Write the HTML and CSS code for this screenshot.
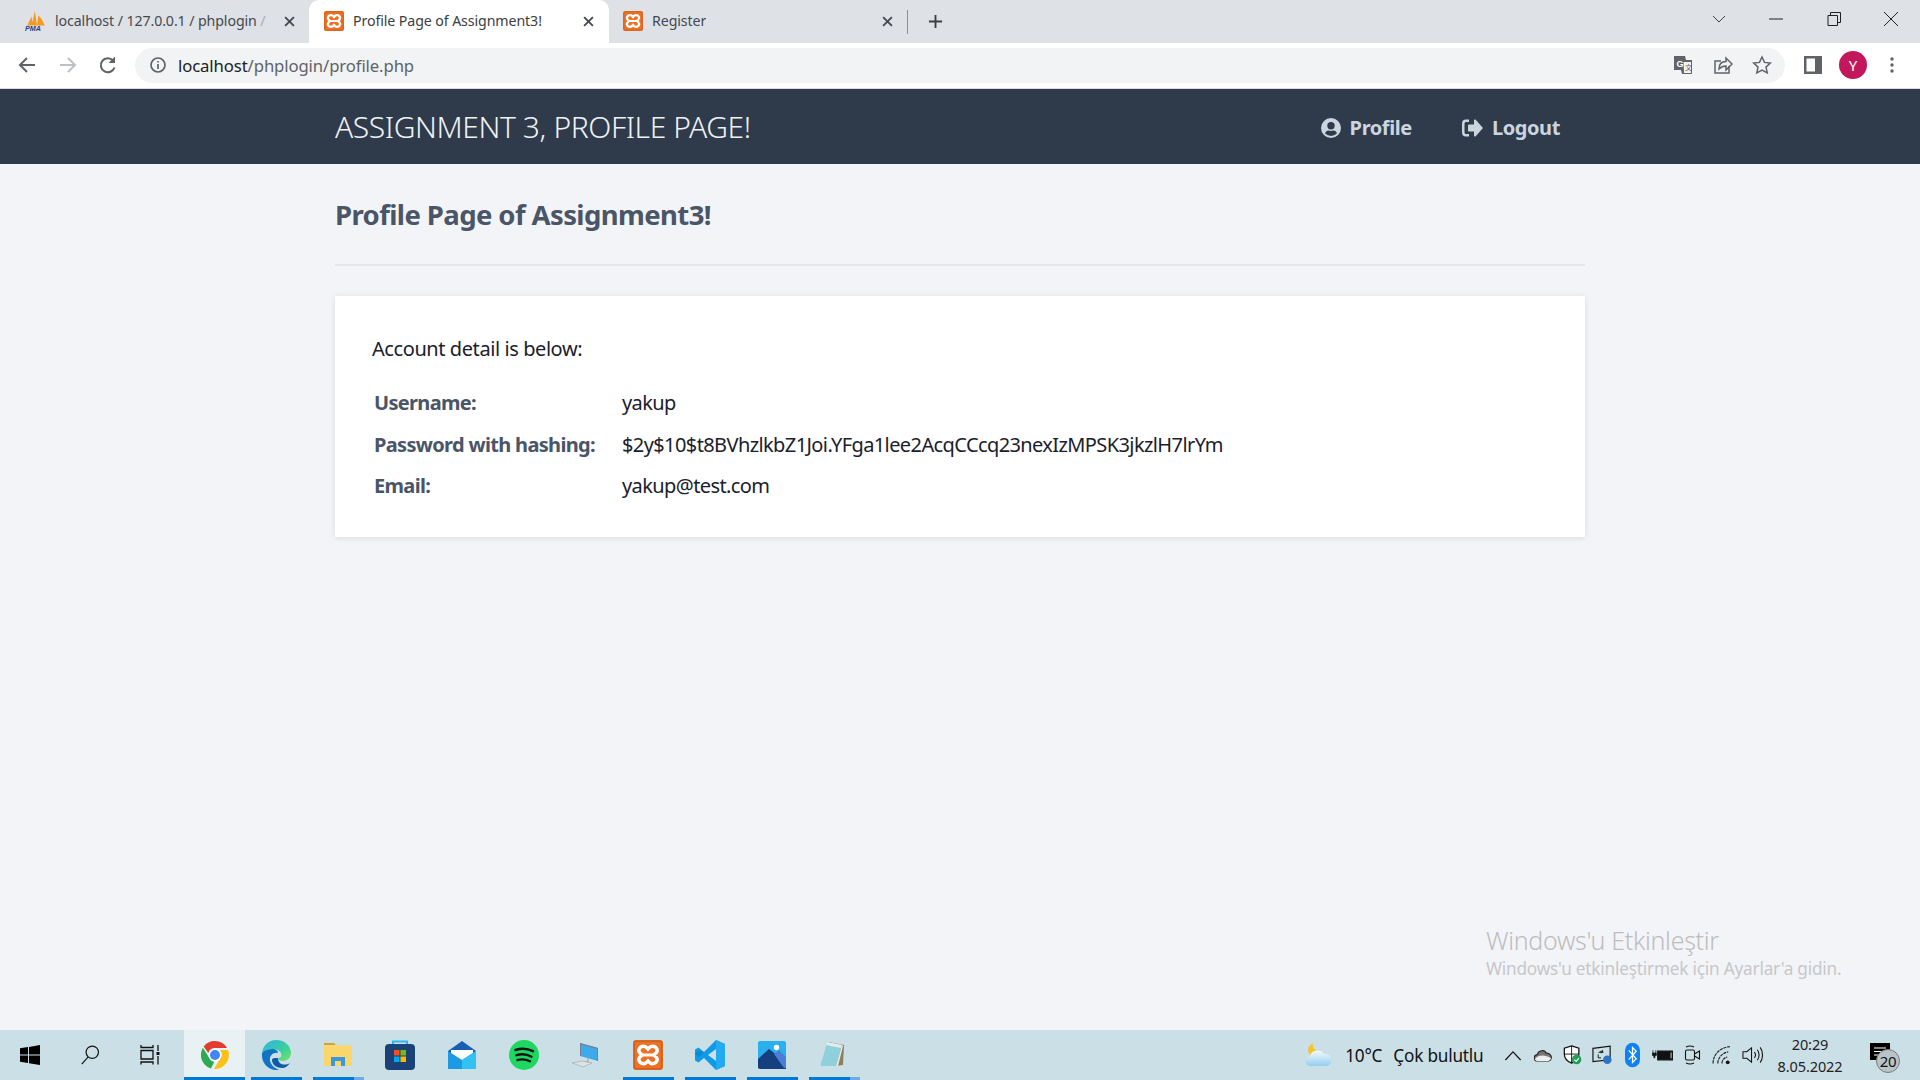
FILE: index.html
```html
<!DOCTYPE html>
<html lang="tr">
<head>
<meta charset="utf-8">
<title>Profile Page of Assignment3!</title>
<link rel="stylesheet" href="styles.css">
</head>
<body>
<div class="browser">
  <div class="tabstrip">
    <div class="tab tab-first">
      <svg class="fav fav-pma" viewBox="0 0 20 20"><path d="M2 14 6 6l1 8zM6 14 9 1l2 13zM11 14l1-9 3 3 3 6z" fill="#f39a22"/><text x="0" y="19.500" class="pma">PMA</text></svg>
      <span class="tab-title">localhost / 127.0.0.1 / phplogin<span class="fade"> /</span></span>
      <svg class="tab-x" viewBox="0 0 10 10"><path d="M1 1l8 8M9 1l-8 8"/></svg>
    </div>
    <div class="tab tab-active">
      <svg class="fav" viewBox="0 0 20 20"><use href="#xampp"/></svg>
      <span class="tab-title">Profile Page of Assignment3!</span>
      <svg class="tab-x" viewBox="0 0 10 10"><path d="M1 1l8 8M9 1l-8 8"/></svg>
    </div>
    <div class="tab tab-third">
      <svg class="fav" viewBox="0 0 20 20"><use href="#xampp"/></svg>
      <span class="tab-title">Register</span>
      <svg class="tab-x" viewBox="0 0 10 10"><path d="M1 1l8 8M9 1l-8 8"/></svg>
    </div>
    <div class="tab-sep"></div>
    <svg class="tab-new" viewBox="0 0 16 16"><path d="M8 1v14M1 8h14"/></svg>
    <div class="win-controls">
      <svg class="wc wc-chev" viewBox="0 0 14 14"><path d="M1 4l6 6 6-6"/></svg>
      <svg class="wc" viewBox="0 0 14 14"><path d="M0 7h14"/></svg>
      <svg class="wc" viewBox="0 0 14 14"><path d="M1 3.500h9.500v10H1zM3.500 3.500V.5h10v10h-3"/></svg>
      <svg class="wc" viewBox="0 0 14 14"><path d="M0 0l14 14M14 0L0 14"/></svg>
    </div>
  </div>

  <div class="toolbar">
    <svg class="tb-ic tb-back" viewBox="0 0 20 20"><path d="M18 10H3M10 3l-7 7 7 7"/></svg>
    <svg class="tb-ic tb-fwd" viewBox="0 0 20 20"><path d="M2 10h15M10 3l7 7-7 7"/></svg>
    <svg class="tb-ic tb-reload" viewBox="0 0 20 20"><path d="M16.500 12.500A7 7 0 1 1 15 5.500"/><path class="solid" d="M17 1.500V8h-6.500z"/></svg>
    <div class="omnibox">
      <svg class="omni-info" viewBox="0 0 18 18"><circle cx="9" cy="9" r="7"/><path d="M9 8v5M9 5v1.600"/></svg>
      <span class="url"><span class="url-host">localhost</span>/phplogin/profile.php</span>
      <svg class="omni-ic omni-translate" viewBox="0 0 20 20"><path class="solid" d="M1 1h11l1 4h6v14H9l-1-4H1z"/><path d="M10 6.500h8.500v12h-8z" class="tr-page"/><text x="3.500" y="12" class="tr-g">G</text><text x="12" y="15" class="tr-t">文</text></svg>
      <svg class="omni-ic omni-share" viewBox="0 0 20 20"><path d="M16 11v7H2V6h6"/><path d="M6 14c0-5 3-7.500 7-7.500V3l6 6-6 6v-4c-3 0-5 1-7 3z"/></svg>
      <svg class="omni-ic omni-star" viewBox="0 0 20 20"><path d="M10 2l2.500 5.400 5.800.7-4.300 4 1.200 5.800L10 15l-5.200 2.900L6 12.100l-4.300-4 5.800-.7z"/></svg>
    </div>
    <svg class="tb-panel" viewBox="0 0 18 18"><path d="M0 0h18v18H0z" fill="#5f6368"/><path d="M2.500 2.500h8.500v13H2.500z" fill="#fff"/></svg>
    <div class="avatar">Y</div>
    <svg class="tb-dots" viewBox="0 0 4 16"><circle cx="2" cy="2" r="1.700"/><circle cx="2" cy="8" r="1.700"/><circle cx="2" cy="14" r="1.700"/></svg>
  </div>

  <main class="page">
    <nav class="navbar">
      <div class="container nav-inner">
        <h1 class="brand">ASSIGNMENT 3, PROFILE PAGE!</h1>
        <div class="nav-links">
          <a class="nav-link nav-profile">
            <svg class="nav-ic" viewBox="0 0 20 20"><path fill-rule="evenodd" d="M10 0a10 10 0 1 0 0 20 10 10 0 0 0 0-20zm0 4a3.700 3.700 0 1 1 0 7.400A3.700 3.700 0 0 1 10 4zm0 14a8 8 0 0 1-6-2.700c.6-1.700 2-2.800 3.500-2.800.8 0 1.500.5 2.500.5s1.700-.5 2.500-.5c1.500 0 2.900 1.100 3.500 2.800A8 8 0 0 1 10 18z"/></svg>
            Profile
          </a>
          <a class="nav-link">
            <svg class="nav-ic nav-ic-out" viewBox="0 0 21 18"><path d="M7 3H4a1.500 1.500 0 0 0-1.500 1.500v9A1.500 1.500 0 0 0 4 15h3v2.500H4A4 4 0 0 1 0 13.500v-9A4 4 0 0 1 4 .5h3z"/><path d="M12 1.500a1 1 0 0 1 1.700-.7L21 9l-7.300 8.200a1 1 0 0 1-1.700-.7V12.500H7a1 1 0 0 1-1-1v-5a1 1 0 0 1 1-1h5z"/></svg>
            Logout
          </a>
        </div>
      </div>
    </nav>
    <div class="container">
      <h2 class="page-title">Profile Page of Assignment3!</h2>
      <hr class="rule">
      <section class="card">
        <p class="lead">Account detail is below:</p>
        <table class="details">
          <tr><th>Username:</th><td>yakup</td></tr>
          <tr><th>Password with hashing:</th><td>$2y$10$t8BVhzlkbZ1Joi.YFga1lee2AcqCCcq23nexIzMPSK3jkzlH7lrYm</td></tr>
          <tr><th>Email:</th><td>yakup@test.com</td></tr>
        </table>
      </section>
    </div>
    <div class="activate">
      <div class="activate-title">Windows'u Etkinleştir</div>
      <div class="activate-sub">Windows'u etkinleştirmek için Ayarlar'a gidin.</div>
    </div>
  </main>

  <footer class="taskbar">
    <div class="sys-btn"><svg class="ic-win" viewBox="0 0 20 20"><path d="M0 3.200l8-1.200v7.500H0zM9 1.900L20 0v9.500H9zM0 10.500h8V18l-8-1.200zM9 10.500h11V20L9 18.200z"/></svg></div>
    <div class="sys-btn"><svg class="ic-line" viewBox="0 0 20 22"><circle cx="12.500" cy="8" r="6.800"/><path d="M8 13 1 21"/></svg></div>
    <div class="sys-btn"><svg class="ic-line" viewBox="0 0 20 20"><path d="M1 5.500h12v8.500H1zM1 0v2.500h12V0M1 19.500V17h12v2.500M18 0v6M18 11v8.500"/><path class="solid" d="M16.500 7h3v3h-3z"/></svg></div>

    <div class="app app-active run"><svg class="app-ic" viewBox="0 0 28 28"><path d="M14 0a14 14 0 0 1 12.100 7H14a7 7 0 0 0-6.700 4.900L2.700 5.500A14 14 0 0 1 14 0z" fill="#e33b2e"/><path d="M1.900 6.700 8 16.500a7 7 0 0 0 5.200 4.400L10 27.400A14 14 0 0 1 1.900 6.700z" fill="#2da94f"/><path d="M27 9a14 14 0 0 1-14 19l6-10a7 7 0 0 0 0-9z" fill="#fbc116"/><circle cx="14" cy="14" r="6.500" fill="#fff"/><circle cx="14" cy="14" r="5" fill="#4285f4"/></svg></div>
    <div class="app run"><svg class="app-ic app-ic-lg" viewBox="0 0 30 30"><defs><linearGradient id="eg" x1="0" y1="0" x2="1" y2="1"><stop offset="0" stop-color="#2fb3e6"/><stop offset=".6" stop-color="#3bd09a"/><stop offset="1" stop-color="#7ce26a"/></linearGradient></defs><path d="M1 13C2 5 8 0 15 0c9 0 15 6 15 13 0 5-4 8-8 8-3 0-5-1-5-3 3 0 4-2 3-5-2-4-9-5-13-3-3 1-6 3-6 3z" fill="url(#eg)"/><path d="M1 13c3-3 7-4 10-4 4 0 6 2 6 4-5-1-9 3-8 8 1 4 4 7 9 9-10 1-18-6-17-17z" fill="#1272c4"/><path d="M11 20c0 5 5 8 10 8 3 0 6-2 8-5-5 3-12 2-12-5-3 0-6 0-6 2z" fill="#0f5aa6"/></svg></div>
    <div class="app run run-multi"><svg class="app-ic" viewBox="0 0 28 28"><path d="M0 2h10l2 2H0z" fill="#e0a21c"/><path d="M0 4.500h28V24a1 1 0 0 1-1 1H1a1 1 0 0 1-1-1z" fill="#fbd66b"/><path d="M7 25v-9h14v9h-4v-5h-6v5z" fill="#3c99d9"/></svg></div>
    <div class="app"><svg class="app-ic app-ic-lg" viewBox="0 0 30 30"><path d="M8 5V1.500h14V5" fill="none" stroke="#2bb7ee" stroke-width="2"/><rect y="4" width="30" height="26" rx="4" fill="#1a4276"/><path d="M9 10h5.500v5.500H9z" fill="#f25022"/><path d="M15.500 10H21v5.500h-5.500z" fill="#7fba00"/><path d="M9 16.500h5.500V22H9z" fill="#00a4ef"/><path d="M15.500 16.500H21V22h-5.500z" fill="#ffb900"/></svg></div>
    <div class="app"><svg class="app-ic" viewBox="0 0 28 28"><path d="M0 10 14 0l14 10v18H0z" fill="#1a60b0"/><path d="M3 9h22v6L14 22 3 15z" fill="#fff"/><path d="M0 10l14 9 14-9v18H0z" fill="#1d9ae4"/><path d="M14 19l14-9v18H14z" fill="#33c1f2"/></svg></div>
    <div class="app"><svg class="app-ic app-ic-lg" viewBox="0 0 30 30"><circle cx="15" cy="15" r="15" fill="#1ed760"/><path d="M6.500 10c6-2 12-1.500 17.500 1.200M7.500 15.200c5-1.500 10.500-1 15 1.500M8.500 20c4.500-1.200 8.500-.7 12.500 1.300" fill="none" stroke="#111" stroke-width="2.400" stroke-linecap="round"/></svg></div>
    <div class="app"><svg class="app-ic" viewBox="0 0 28 28"><path d="M8 2l18 5v13L8 15z" fill="#3fa9ee"/><path d="M8 2l18 5v13l-1-.3V8L9 3.500V15H8z" fill="#75808c"/><path d="M16 16v5l-6 0" fill="none" stroke="#95a0a8" stroke-width="1"/><path d="M0 22l10-2 10 2-9 4z" fill="#dde2e4" stroke="#9aa5ab" stroke-width=".6"/></svg></div>
    <div class="app run"><svg class="app-ic app-ic-xampp" viewBox="0 0 20 20"><use href="#xampp"/></svg></div>
    <div class="app run"><svg class="app-ic app-ic-lg" viewBox="0 0 30 30"><path d="M21 0 9 12 3.500 7.500 0 9.500v11l3.500 2L9 18l12 12 9-4V4zM22 9v12l-8-6z" fill="#0f9ae8" fill-rule="evenodd"/><path d="M21 0l9 4v22l-9 4z" fill="#23aaf1"/><path d="M21 9v12l-8-6z" fill="#cde0e6"/><path d="M21 0 4 17l-4-3 3-3 6 1z" fill="#0a78c2" opacity=".5"/></svg></div>
    <div class="app run"><svg class="app-ic" viewBox="0 0 28 28"><rect width="28" height="28" rx="2" fill="#2bb0ee"/><circle cx="18.500" cy="6.500" r="2.700" fill="#fff"/><path d="M0 27V18L11 8l17 13v7H2z" fill="#14407f"/><path d="M16 13l5-4 7 7v11H26z" fill="#4a7fd6"/></svg></div>
    <div class="app run run-multi"><svg class="app-ic" viewBox="0 0 28 28"><path d="M8 1l16 3-1 20-8 1z" fill="#8d7f5a"/><path d="M7 1l15 3-6 21H1C0 22 2 20 3 16z" fill="#8fd0dc"/><path d="M7 1l15 3-1 3L6 4z" fill="#e7eaeb"/><path d="M16 25l6-21 1 1-5 20z" fill="#e8ecec"/></svg></div>

    <div class="tray">
      <svg class="weather-ic" viewBox="0 0 28 26"><defs><linearGradient id="wg" x1="0" y1="0" x2="0" y2="1"><stop offset="0" stop-color="#f6fbfe"/><stop offset="1" stop-color="#94cdf0"/></linearGradient></defs><path d="M8 1c-1 4 1 7 6 8l-7 5c-5-3-6-9 1-13z" fill="#f4c430"/><path d="M6 24a5 5 0 0 1-1-10c1-6 10-8 14-2a6 6 0 0 1 3 12z" fill="url(#wg)"/></svg>
      <span class="weather-text">10°C</span>
      <span class="weather-text weather-desc">Çok bulutlu</span>
      <div class="tray-icons">
        <span class="tray-cell"><svg class="tray-ic" viewBox="0 0 20 12"><path d="M1.500 11 10 2l8.500 9" fill="none"/></svg></span>
        <span class="tray-cell"><svg class="tray-ic" viewBox="0 0 20 14"><path d="M4 13a3.500 3.500 0 0 1-.5-7C5 1 12 0 13.500 4.500 17 4 20 7 19 10.500c-.4 1.700-1.500 2.500-3 2.500z" fill="#777" stroke="#222"/><path d="M1 11c4-5 11-5 18-1-1 2-2 3-3 3H4c-2 0-3-1-3-2z" fill="#eee" stroke="none"/></svg></span>
        <span class="tray-cell"><svg class="tray-ic tray-ic-lg" viewBox="0 0 20 22"><path d="M9 1l8 2.500V10c0 5-3 8-8 10-5-2-8-5-8-10V3.500z" fill="#fff" stroke="#111" stroke-width="1.400"/><path d="M9 1v19M1 10h16" stroke="#111" stroke-width="1"/><circle cx="14.500" cy="16" r="5.200" fill="#1e9e56" stroke="none"/><path d="M12 16l2 2 3-3.500" fill="none" stroke="#fff" stroke-width="1.300"/></svg></span>
        <span class="tray-cell"><svg class="tray-ic tray-ic-lg" viewBox="0 0 22 20"><path d="M1 3 19 .8V15L1 17z" fill="none" stroke="#111" stroke-width="1.200"/><path d="M7 8a3 3 0 0 1 5-1M11 5v2.500H8.500M6.500 9.500V13h3" fill="none" stroke="#111" stroke-width="1"/><circle cx="16" cy="15" r="4.500" fill="#2f74c0" stroke="none"/></svg></span>
        <span class="tray-cell"><svg class="tray-ic tray-ic-bt" viewBox="0 0 16 26"><rect width="16" height="26" rx="8" fill="#0f82f2" stroke="none"/><path d="M4 8l8 9-4 4V5l4 4-8 9" fill="none" stroke="#fff" stroke-width="1.300"/></svg></span>
        <span class="tray-cell"><svg class="tray-ic tray-ic-lg" viewBox="0 0 22 14"><path d="M6 3h15.500v9H6z" fill="#111" stroke="#111"/><path d="M19.500 4.500h1v6h-1z" fill="#cbe0e6" stroke="none"/><path d="M1 2v3M4 2v3M.500 5h4v2.500H3V10H2V7.500H.500z" fill="#111" stroke="#111" stroke-width=".8"/></svg></span>
        <span class="tray-cell"><svg class="tray-ic tray-ic-lg" viewBox="0 0 18 20"><path d="M2 6.500c0-1 .6-1.500 1.500-1.500h6c1 0 1.500.6 1.500 1.500v7c0 1-.6 1.500-1.500 1.500h-6c-1 0-1.500-.6-1.500-1.500zM11 9l5-3v8l-5-3M2.500 2c3-1.400 5-1.400 8 0M2.500 18c3 1.400 5 1.400 8 0" fill="none" stroke="#111" stroke-width="1.100"/></svg></span>
        <span class="tray-cell"><svg class="tray-ic tray-ic-lg" viewBox="0 0 20 18"><path d="M1 17C1 9 7 2 17 1M5.500 17c0-5 4-10 10-11M9.500 17c0-3 2-5.500 5-6" fill="none" stroke="#222" stroke-width="1.100" stroke-dasharray="3 .7"/><circle cx="15" cy="16" r="1.800" fill="#111" stroke="none"/></svg></span>
        <span class="tray-cell"><svg class="tray-ic tray-ic-lg" viewBox="0 0 22 20"><path d="M1 6.500h4L10 2.500v15l-5-4H1zM13 7c1.400 1.800 1.400 4.200 0 6M16 4.500c2.500 3 2.500 8 0 11M19 2c3.300 4 3.300 12 0 16" fill="none" stroke="#111" stroke-width="1.100"/></svg></span>
      </div>
      <div class="clock"><span>20:29</span><span>8.05.2022</span></div>
      <div class="notify">
        <svg class="notify-ic" viewBox="0 0 20 20"><path d="M0 0h20v17H0z" fill="#000"/><path d="M4 5h12M4 8.500h12M4 12h8" stroke="#fff" stroke-width="1.200"/></svg>
        <span class="notify-badge">20</span>
      </div>
    </div>
  </footer>
</div>
<svg class="defs" width="0" height="0"><defs><g id="xampp"><rect width="20" height="20" rx="2" fill="#ed7125"/><rect x=".8" y=".8" width="18.400" height="18.400" rx="1.500" fill="none" stroke="#c95f1c" stroke-width=".8"/><path d="M7 4.200C8.500 4.200 9.200 5 10 6c.8-1 1.500-1.800 3-1.800 2.500 0 4 2.500 2.500 4.300L14 10l1.500 1.500c1.500 1.800 0 4.300-2.500 4.300-1.500 0-2.200-.8-3-1.800-.8 1-1.500 1.800-3 1.800-2.500 0-4-2.500-2.500-4.300L6 10 4.500 8.500C3 6.700 4.500 4.200 7 4.200z" fill="none" stroke="#fff" stroke-width="2.300"/><path d="M6 10h8" stroke="#fff" stroke-width="2"/></g></defs></svg>
</body>
</html>
```
FILE: styles.css
```css
* { box-sizing: border-box; }
html, body { margin: 0; padding: 0; }
body { width: 1920px; height: 1080px; overflow: hidden; font-family: "Noto Sans", "Open Sans", sans-serif; color: #1a202c; }
.browser { display: flex; flex-direction: column; height: 1080px; }
.defs { position: absolute; }

/* tab strip */
.tabstrip { display: flex; align-items: center; height: 43px; flex: none; background: #dee1e6; padding-left: 8px; font-size: 14.200px; }
.tab { display: flex; align-items: center; height: 43px; color: #45494f; position: relative; }
.tab-first { width: 301px; padding-left: 17px; padding-bottom: 2px; }
.tab-active { width: 300px; padding-left: 15px; padding-bottom: 2px; background: #fff; border-radius: 10px 10px 0 0; color: #3c4043; }
.tab-third { width: 298px; padding-left: 14px; padding-bottom: 2px; }
.fav { width: 20px; height: 20px; flex: none; }
.fav-pma { width: 22px; height: 22px; }
.pma { font: italic bold 6.500px "Liberation Sans", sans-serif; fill: #2a3d86; }
.tab-title { margin-left: 9px; white-space: nowrap; letter-spacing: -.1px; overflow: hidden; }
.tab-first .tab-title { margin-left: 8px; }
.fade { color: #a9acb1; }
.tab-x { position: absolute; right: 14px; top: 16px; width: 11px; height: 11px; fill: none; stroke: #45494f; stroke-width: 1.700; }
.tab-active .tab-x { right: 15px; }
.tab-third .tab-x { right: 14px; }
.tab-sep { width: 1px; height: 24px; background: #8b8f94; margin-left: 0; }
.tab-new { width: 15px; height: 15px; margin-left: 20px; fill: none; stroke: #3c4043; stroke-width: 2; }
.win-controls { display: flex; align-items: center; margin-left: auto; padding-right: 22px; gap: 43.300px; height: 38px; align-self: flex-start; }
.wc { width: 14px; height: 14px; fill: none; stroke: #202124; stroke-width: 1; }
.wc-chev { stroke: #404245; }

/* toolbar */
.toolbar { display: flex; align-items: center; height: 46px; flex: none; background: #fff; border-bottom: 1px solid #dadce0; padding-bottom: 1px; position: relative; }
.tb-ic { width: 20px; height: 20px; flex: none; fill: none; stroke: #5f6368; stroke-width: 2; }
.tb-ic .solid { fill: #5f6368; stroke: none; }
.tb-back { margin-left: 17px; }
.tb-fwd { margin-left: 21px; stroke: #bdc1c6; }
.tb-reload { margin-left: 20px; }
.omnibox { display: flex; align-items: center; width: 1650px; height: 35px; margin-left: 17px; padding-left: 14px; background: #f1f3f4; border-radius: 18px; }
.omni-info { width: 18px; height: 18px; flex: none; fill: none; stroke: #5f6368; stroke-width: 1.700; }
.url { margin-left: 11px; font-size: 16.700px; color: #5f6368; letter-spacing: -.1px; white-space: nowrap; }
.url-host { color: #202124; }
.omni-ic { width: 20px; height: 20px; flex: none; fill: none; stroke: #5f6368; stroke-width: 1.500; }
.omni-ic .solid { fill: #5f6368; stroke: none; }
.tr-page { fill: #f1f3f4; stroke-width: 1; }
.tr-g { font: bold 9px "Liberation Sans", sans-serif; fill: #fff; stroke: none; }
.tr-t { font: 7px "Noto Sans CJK SC", sans-serif; fill: #5f6368; stroke: none; }
.omni-translate { margin-left: auto; }
.omni-share { margin-left: 20px; }
.omni-star { margin-left: 19px; margin-right: 13px; }
.tb-panel { width: 18px; height: 18px; flex: none; margin-left: 19px; }
.avatar { width: 28px; height: 28px; flex: none; margin-left: 17px; border-radius: 50%; background: #c2185b; color: #fff; font-size: 15px; line-height: 28px; text-align: center; }
.tb-dots { width: 4px; height: 16px; flex: none; margin-left: 23px; fill: #5f6368; }

/* page */
.page { flex: 1; background: #f3f4f8; position: relative; min-height: 0; }
.container { width: 1250px; margin: 0 auto; }
.navbar { height: 75px; background: #2f3a4a; }
.nav-inner { display: flex; align-items: center; justify-content: space-between; height: 75px; }
.brand { margin: 0; font-size: 30px; font-weight: 300; color: #edf2f7; white-space: nowrap; letter-spacing: -.4px; }
.nav-links { display: flex; gap: 50px; padding-right: 25px; padding-top: 2px; }
.nav-link { display: flex; align-items: center; font-size: 20px; font-weight: 700; color: #cbd5e0; letter-spacing: -.4px; }
.nav-ic { width: 20px; height: 20px; margin-right: 10px; fill: currentColor; }
.nav-ic-out { width: 21px; height: 18px; margin-right: 9px; }
.nav-profile .nav-ic { margin-right: 9px; }
.page-title { margin: 30px 0 0; font-size: 27.500px; line-height: 42px; font-weight: 700; color: #4a5568; letter-spacing: -.6px; white-space: nowrap; }
.rule { margin: 28px 0 0; height: 2px; border: 0; background: #e5e7eb; }
.card { margin-top: 30px; height: 241px; padding: 38px 37px; background: #fff; box-shadow: 0 1px 6px rgba(0, 0, 0, .1); }
.lead { margin: 0; font-size: 20px; line-height: 30px; color: #1a202c; letter-spacing: -.42px; }
.details { margin: 18px 0 0 2px; border-collapse: collapse; font-size: 20px; }
.details th { width: 248px; height: 41.500px; padding: 0; text-align: left; font-weight: 700; color: #4a5568; letter-spacing: -.67px; white-space: nowrap; }
.details td { padding: 0; color: #1a202c; letter-spacing: -.6px; white-space: nowrap; }
.activate { position: absolute; left: 1486px; top: 833.500px; color: #bdbdbd; }
.activate-title { font-size: 25px; line-height: 34px; white-space: nowrap; letter-spacing: -.3px; font-weight: 300; }
.activate-sub { font-size: 17.200px; line-height: 24px; white-space: nowrap; letter-spacing: -.2px; color: #c6c7c9; }

/* taskbar */
.taskbar { display: flex; height: 50px; flex: none; background: #cbe0e6; align-items: stretch; }
.sys-btn { width: 60px; flex: none; display: flex; align-items: center; justify-content: center; }
.sys-btn:nth-child(3) { margin-right: 3px; }
.ic-win { width: 20px; height: 20px; fill: #000; }
.ic-line { width: 20px; height: 20px; fill: none; stroke: #111; stroke-width: 1.300; }
.ic-line .solid { fill: #111; stroke: none; }
.app { width: 62px; flex: none; display: flex; align-items: center; justify-content: center; position: relative; }
.app-active { background: #e8f2f4; background-clip: content-box; padding: 0 0 0 1px; }
.run::after { content: ""; position: absolute; left: 6px; right: 5px; bottom: 0; height: 3px; background: #0078d4; }
.app-active::after { left: 1px; right: 0; }
.run-multi::after { right: 15px; }
.run-multi::before { content: ""; position: absolute; left: 47px; width: 10px; bottom: 0; height: 3px; background: #6aade8; }
.app-ic { width: 28px; height: 28px; }
.app-ic-lg { width: 30px; height: 30px; }
.app-ic-xampp { width: 30px; height: 30px; }
.tray { display: flex; align-items: center; margin-left: auto; color: #111; }
.weather-ic { width: 28px; height: 26px; margin-right: 12px; }
.weather-text { font-size: 17.200px; letter-spacing: -.2px; white-space: nowrap; }
.weather-desc { margin-left: 11px; }
.tray-icons { display: flex; align-items: center; margin-left: 14px; }
.tray-cell { width: 30px; display: flex; justify-content: center; align-items: center; }
.tray-ic { width: 18px; height: 13px; fill: none; stroke: #111; stroke-width: 1.300; }
.tray-ic-lg { width: 21px; height: 20px; }
.tray-ic-bt { width: 15px; height: 26px; }
.clock { display: flex; flex-direction: column; align-items: center; width: 88px; margin-left: -1.500px; font-size: 14.500px; line-height: 22px; letter-spacing: -.1px; color: #222; }
.notify { position: relative; width: 30px; height: 30px; margin: 0 20px 0 16px; }
.notify-ic { position: absolute; left: 0; top: 3px; width: 20px; height: 20px; }
.notify-badge { position: absolute; left: 6px; top: 9px; width: 24px; height: 24px; border-radius: 50%; background: #b8c4c8; border: 1px solid #7c7c7c; font-size: 15px; line-height: 22px; text-align: center; color: #111; letter-spacing: -.3px; }
```
